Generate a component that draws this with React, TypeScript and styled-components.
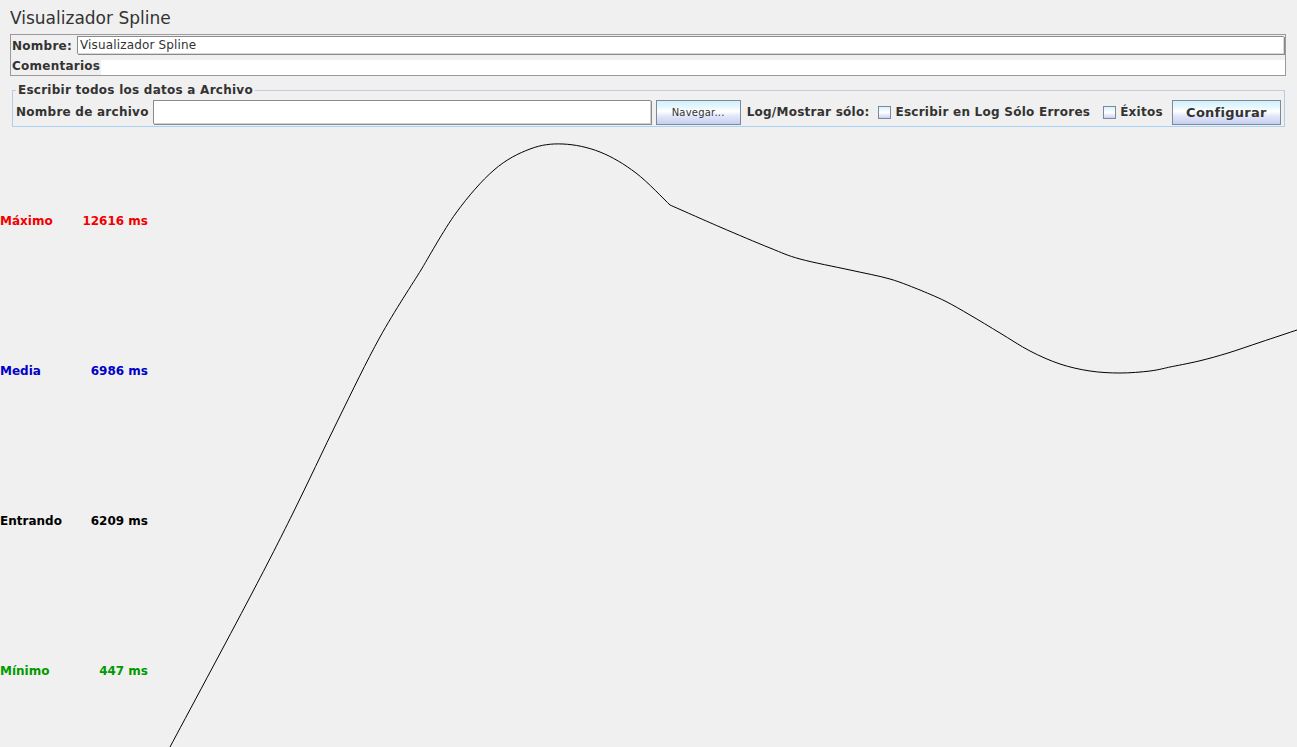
import React from "react";
import styled, { createGlobalStyle } from "styled-components";

const GlobalStyle = createGlobalStyle`
  html, body {
    margin: 0;
    padding: 0;
    background: #f0f0f0;
    font-family: "DejaVu Sans", "Liberation Sans", sans-serif;
    color: #333333;
  }
  * { box-sizing: border-box; }
`;

const Page = styled.div`
  width: 1297px;
  height: 747px;
  overflow: hidden;
  display: flex;
  flex-direction: column;
  background: #f0f0f0;
`;

const Title = styled.div`
  height: 34px;
  flex: none;
  padding: 8px 0 0 10px;
  font-size: 17px;
  line-height: 20px;
  color: #333;
`;

const NamePanel = styled.div`
  flex: none;
  margin: 0 11px 0 10px;
  border: 1px solid #9a9a9a;
  display: flex;
  flex-direction: column;
`;

const PanelRow = styled.div<{ $h: number }>`
  display: flex;
  align-items: center;
  height: ${(p) => p.$h}px;
`;

const BoldLabel = styled.span`
  font-weight: bold;
  font-size: 12px;
  letter-spacing: 0.25px;
  color: #333;
  white-space: nowrap;
  padding-left: 1px;
`;

const NameField = styled.div`
  flex: 1;
  align-self: flex-start;
  margin: 1px 1px 0 5px;
  height: 18px;
  background: #fff;
  border: 1px solid #8a8a8a;
  border-right-color: #d8d8d8;
  border-bottom-color: #d8d8d8;
  box-shadow: 1px 1px 0 #8a8a8a;
  font-size: 12px;
  letter-spacing: 0.15px;
  line-height: 16px;
  padding-left: 2px;
  color: #333;
`;

const CommentArea = styled.div`
  flex: 1;
  align-self: flex-end;
  height: 15px;
  margin-left: 1px;
  background: #fff;
`;

const FileSet = styled.fieldset`
  flex: none;
  margin: 7px 12px 0 12px;
  padding: 2px 2px 1px 2px;
  border: 1px solid #b4cde6;
  border-top-color: #c2ccd6;
  border-bottom-color: #a8d2f4;
  min-width: 0;
`;

const Legend = styled.legend`
  font-size: 12px;
  font-weight: bold;
  letter-spacing: 0.25px;
  color: #333;
  padding: 0 2px;
  margin-left: 1px;
  line-height: 14px;
`;

const FileRow = styled.div`
  display: flex;
  align-items: center;
  height: 26px;
`;

const FileInput = styled.div`
  width: 498px;
  height: 24px;
  margin-left: 4px;
  background: #fff;
  border: 1px solid #8a8a8a;
  border-right-color: #d0d0d0;
  border-bottom-color: #d0d0d0;
  box-shadow: 1px 1px 0 #8a8a8a;
`;

const OceanButton = styled.div<{ $w: number; $bold?: boolean; $size: number }>`
  width: ${(p) => p.$w}px;
  height: 25px;
  flex: none;
  border: 1px solid #7a8a99;
  background: linear-gradient(
    to bottom,
    #d2f0fc 0%,
    #e6f7fe 25%,
    #ffffff 45%,
    #e2e7f8 65%,
    #c6cff2 100%
  );
  display: flex;
  align-items: center;
  justify-content: center;
  font-size: ${(p) => p.$size}px;
  font-weight: ${(p) => (p.$bold ? "bold" : "normal")};
  letter-spacing: ${(p) => (p.$bold ? "0.25px" : "0.2px")};
  color: #333;
  white-space: nowrap;
`;

const CheckItem = styled.label`
  display: flex;
  align-items: center;
  gap: 4px;
  font-size: 12px;
  font-weight: bold;
  letter-spacing: 0.25px;
  color: #333;
  white-space: nowrap;
`;

const CheckBox = styled.span`
  width: 13px;
  height: 13px;
  border: 1px solid #7a8a99;
  background: linear-gradient(to bottom, #d6f1fc, #ffffff 50%, #c9d2f2);
  display: inline-block;
`;

const Chart = styled.div`
  flex: 1;
  display: flex;
  min-height: 0;
`;

const LegendColumn = styled.div`
  width: 150px;
  flex: none;
  padding-top: 87px;
  padding-right: 2px;
  display: flex;
  flex-direction: column;
`;

const StatRow = styled.div<{ $color: string }>`
  height: 150px;
  flex: none;
  display: flex;
  justify-content: space-between;
  font-size: 12px;
  font-weight: bold;
  line-height: 14px;
  color: ${(p) => p.$color};
`;

const Plot = styled.svg`
  flex: none;
  display: block;
  overflow: visible;
`;

type Pt = [number, number];

const segments: Pt[][] = [
  [
    [170, 747],
    [250, 597],
    [293, 513],
    [338, 420],
    [380, 337],
    [421, 270],
  ],
  [
    [421, 270],
    [456, 213],
    [494, 170],
    [530, 149],
    [563, 144],
    [600, 152],
    [636, 173],
    [670, 205],
  ],
  [
    [670, 205],
    [720, 227],
    [770, 248],
    [800, 259],
    [850, 270],
    [890, 279],
    [920, 290],
  ],
  [
    [920, 290],
    [945, 301],
    [970, 315],
    [1000, 333],
    [1030, 351],
    [1060, 364],
    [1090, 371],
    [1120, 373],
    [1150, 371],
    [1170, 367],
  ],
  [
    [1170, 367],
    [1199, 361],
    [1228, 353],
    [1261, 342],
    [1297, 330],
  ],
];

function catmull(points: Pt[]): string {
  let d = "";
  for (let i = 0; i < points.length - 1; i++) {
    const p0 = points[i - 1] || points[i];
    const p1 = points[i];
    const p2 = points[i + 1];
    const p3 = points[i + 2] || p2;
    const c1x = p1[0] + (p2[0] - p0[0]) / 6;
    const c1y = p1[1] + (p2[1] - p0[1]) / 6;
    const c2x = p2[0] - (p3[0] - p1[0]) / 6;
    const c2y = p2[1] - (p3[1] - p1[1]) / 6;
    d += ` C${c1x.toFixed(2)},${c1y.toFixed(2)} ${c2x.toFixed(2)},${c2y.toFixed(2)} ${p2[0]},${p2[1]}`;
  }
  return d;
}

const curvePath =
  `M${segments[0][0][0]},${segments[0][0][1]}` +
  segments.map((s) => catmull(s)).join("");

const stats = [
  { label: "Máximo", value: "12616 ms", color: "#f00000" },
  { label: "Media", value: "6986 ms", color: "#0000c8" },
  { label: "Entrando", value: "6209 ms", color: "#000000" },
  { label: "Mínimo", value: "447 ms", color: "#009a00" },
];

export default function App() {
  return (
    <>
      <GlobalStyle />
      <Page>
        <Title>Visualizador Spline</Title>
        <NamePanel>
          <PanelRow $h={22}>
            <BoldLabel>Nombre:</BoldLabel>
            <NameField>Visualizador Spline</NameField>
          </PanelRow>
          <PanelRow $h={18}>
            <BoldLabel>Comentarios</BoldLabel>
            <CommentArea />
          </PanelRow>
        </NamePanel>
        <FileSet>
          <Legend>Escribir todos los datos a Archivo</Legend>
          <FileRow>
            <BoldLabel>Nombre de archivo</BoldLabel>
            <FileInput />
            <OceanButton $w={85} $size={10} style={{ marginLeft: 5 }}>
              Navegar...
            </OceanButton>
            <BoldLabel style={{ marginLeft: 5 }}>Log/Mostrar sólo:</BoldLabel>
            <CheckItem style={{ marginLeft: 9 }}>
              <CheckBox />
              Escribir en Log Sólo Errores
            </CheckItem>
            <CheckItem style={{ marginLeft: 13 }}>
              <CheckBox />
              Éxitos
            </CheckItem>
            <OceanButton $w={109} $size={13} $bold style={{ marginLeft: 9 }}>
              Configurar
            </OceanButton>
          </FileRow>
        </FileSet>
        <Chart>
          <LegendColumn>
            {stats.map((s) => (
              <StatRow key={s.label} $color={s.color}>
                <span>{s.label}</span>
                <span>{s.value}</span>
              </StatRow>
            ))}
          </LegendColumn>
          <Plot width={1147} height={620} viewBox="150 127 1147 620">
            <path d={curvePath} fill="none" stroke="#000" strokeWidth={1} />
          </Plot>
        </Chart>
      </Page>
    </>
  );
}
